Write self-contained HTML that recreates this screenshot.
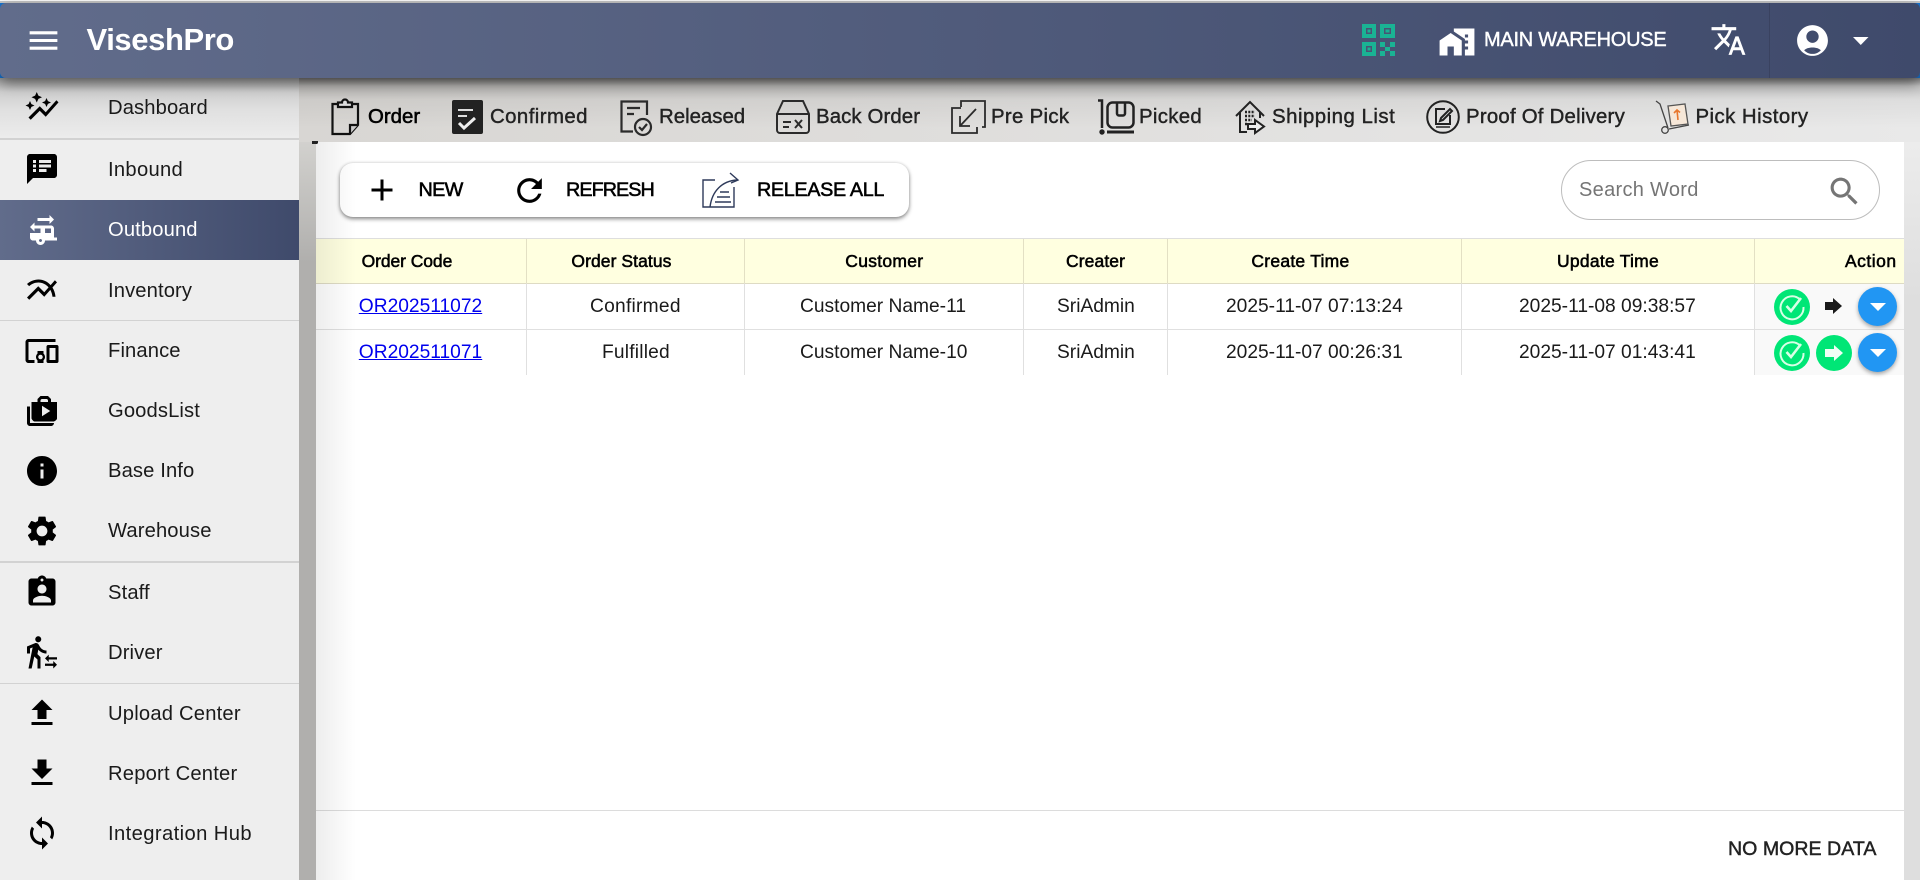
<!DOCTYPE html>
<html lang="en">
<head>
<meta charset="utf-8">
<title>ViseshPro</title>
<style>
html,body{margin:0;padding:0;width:1920px;height:880px;overflow:hidden;background:#fff}
body{position:relative;font-family:"Liberation Sans",Arial,sans-serif;color:#1a1a1a}
*{box-sizing:border-box}
.a{position:absolute}
.t{position:absolute;white-space:nowrap;line-height:24px;height:24px}
svg{position:absolute;display:block;overflow:visible}
#topline{left:0;top:1px;width:1920px;height:2px;background:#c8c8c8}
#cornerfill{left:0;top:3px;width:1920px;height:76px;background:#1976d2}
#hdr{left:0;top:3px;width:1920px;height:75px;background:linear-gradient(90deg,#616c8b 0%,#3f4a6b 100%);border-radius:6px;z-index:5;box-shadow:0 5px 14px rgba(0,0,0,.45)}
#side{left:0;top:78px;width:299px;height:802px;background:#eee}
#sideshade{left:0;top:78px;width:299px;height:60px;background:linear-gradient(180deg,#9f9f9f 0,#cfcfcf 14px,#e0e0e0 32px,#ececec 60px)}
.sep{position:absolute;left:0;width:299px;background:#d2d2d2}
#active{left:0;top:200px;width:299px;height:60px;background:linear-gradient(90deg,#616c8b,#3f4a6b)}
.nav{left:108px;font-size:20.2px;letter-spacing:.12px}
#band{left:299px;top:78px;width:1621px;height:64px;background:linear-gradient(90deg,#d8d6d3,#e9e9e9)}
#bandshade{left:299px;top:78px;width:1621px;height:64px;background:linear-gradient(180deg,rgba(0,0,0,.42) 0,rgba(0,0,0,.16) 8px,rgba(0,0,0,.05) 22px,rgba(0,0,0,0) 50px)}
#strip{left:299px;top:142px;width:17px;height:738px;background:linear-gradient(180deg,#d2d1ce 0,#b0afad 120px)}
#rstrip{left:1904px;top:142px;width:16px;height:738px;background:linear-gradient(180deg,#ececec 0,#dedede 160px)}
#card{left:316px;top:142px;width:1588px;height:738px;background:#fff;border-radius:5px 5px 0 0}
#fade{left:316px;top:142px;width:40px;height:738px;background:linear-gradient(90deg,rgba(0,0,0,.07),rgba(0,0,0,0));z-index:3;pointer-events:none}
.tab{font-size:20.4px;color:#222;-webkit-text-stroke:.4px #222;top:104.7px}
#btns{left:340px;top:163px;width:569px;height:54px;background:#fff;border-radius:13px;box-shadow:0 2px 4px rgba(0,0,0,.45),0 0 3px rgba(0,0,0,.12)}
.btn{font-size:19.8px;color:#000;-webkit-text-stroke:.55px #000;top:178px}
#search{left:1561px;top:160px;width:319px;height:60px;border:1px solid #bdbdbd;border-radius:30px;background:#fff}
#thead{left:316px;top:238px;width:1588px;height:46px;background:#ffffe0;border-top:1px solid #dedede;border-bottom:1px solid #dedbc4}
#r1line{left:316px;top:329px;width:1588px;height:1px;background:#e0e0e0}
#actbg{left:1755px;top:284px;width:149px;height:91px;background:#f9f9f9}
.vl{position:absolute;top:239px;width:1px;height:136px;background:linear-gradient(180deg,#e3e0c4 0,#e3e0c4 44px,#e0e0e0 45px,#e0e0e0 100%)}
.th{font-size:17.5px;color:#000;-webkit-text-stroke:.55px #000;top:249px}
.td{font-size:19.2px;color:#1a1a1a}
.r1{top:295px}.r2{top:341px}
a.t{color:#0000ee;text-decoration:underline}
.cir{position:absolute;width:36px;height:36px;border-radius:50%;background:#00e676}
.blue{position:absolute;left:1858px;width:39px;height:39px;border-radius:50%;background:#2196f3;box-shadow:0 2px 4px rgba(0,0,0,.35)}
#foot{left:316px;top:810px;width:1588px;height:1px;background:#dcdcdc}
</style>
</head>
<body>
<div class="a" id="topline"></div>
<div class="a" id="cornerfill"></div>

<!-- drawer -->
<div class="a" id="side"></div>
<div class="a" id="sideshade"></div>
<div class="sep" style="top:138px;height:2px"></div>
<div class="sep" style="top:320px;height:1px"></div>
<div class="sep" style="top:561px;height:2px"></div>
<div class="sep" style="top:683px;height:1px"></div>
<div class="a" id="active"></div>

<svg style="left:24px;top:89px" width="36" height="36" viewBox="0 0 24 24"><path d="M14.06 9.94L12 9l2.06-.94L15 6l.94 2.06L18 9l-2.06.94L15 12l-.94-2.06zM4 14l.94-2.06L7 11l-2.06-.94L4 8l-.94 2.06L1 11l2.06.94L4 14zm4.5-5l1.09-2.41L12 5.5 9.59 4.41 8.5 2 7.41 4.41 5 5.5l2.41 1.09L8.5 9zm-4 11.5l6-6.01 4 4L23 8.93l-1.41-1.41-7.09 7.97-4-4L3 19l1.5 1.5z"/></svg>
<div class="t nav" style="top:96px">Dashboard</div>
<svg style="left:24px;top:151px" width="36" height="36" viewBox="0 0 24 24"><path d="M20 2H4c-1.1 0-1.99.9-1.99 2L2 22l4-4h14c1.1 0 2-.9 2-2V4c0-1.1-.9-2-2-2zM8 14H6v-2h2v2zm0-3H6V9h2v2zm0-3H6V6h2v2zm7 6h-5v-2h5v2zm3-3h-8V9h8v2zm0-3h-8V6h8v2z"/></svg>
<div class="t nav" style="top:158px;letter-spacing:.3px">Inbound</div>
<svg style="left:24px;top:212px" width="36" height="36" viewBox="0 0 24 24" fill="#fff"><path d="M20 17v-6c0-1.1-.9-2-2-2H7V7l-3 3 3 3v-2h4v3H4v3c0 1.1.9 2 2 2h2c0 1.66 1.34 3 3 3s3-1.34 3-3h8v-2h-2zm-9 3c-.55 0-1-.45-1-1s.45-1 1-1 1 .45 1 1-.45 1-1 1zm7-6h-4v-3h4v3zM17 2v2H9v2h8v2l3-3z"/></svg>
<div class="t nav" style="top:218px;color:#fff">Outbound</div>
<svg style="left:24px;top:272px" width="36" height="36" viewBox="0 0 24 24"><path d="M22 6.92l-1.41-1.41-2.85 3.21C15.68 6.4 12.83 5 9.61 5 6.72 5 4.07 6.16 2 8l1.42 1.42C5.12 7.93 7.27 7 9.61 7c2.74 0 5.09 1.26 6.77 3.24l-2.88 3.24-4-4L2 16.99l1.5 1.5 6-6.01 4 4 4.05-4.55c.75 1.35 1.25 2.9 1.44 4.55H21c-.22-2.3-.95-4.39-2.04-6.14L22 6.92z"/></svg>
<div class="t nav" style="top:278.500px">Inventory</div>
<svg style="left:24px;top:333px" width="36" height="36" viewBox="0 0 24 24"><path d="M3 6h18V4H3c-1.1 0-2 .9-2 2v12c0 1.1.9 2 2 2h4v-2H3V6zm10 6H9v1.78c-.61.55-1 1.33-1 2.22s.39 1.67 1 2.22V20h4v-1.78c.61-.55 1-1.34 1-2.22s-.39-1.67-1-2.22V12zm-2 5.5c-.83 0-1.5-.67-1.5-1.5s.67-1.5 1.5-1.5 1.5.67 1.5 1.5-.67 1.5-1.5 1.5zM22 8h-6c-.5 0-1 .5-1 1v10c0 .5.5 1 1 1h6c.5 0 1-.5 1-1V9c0-.5-.5-1-1-1zm-1 10h-4v-8h4v8z"/></svg>
<div class="t nav" style="top:339px">Finance</div>
<svg style="left:24px;top:393px" width="36" height="36" viewBox="0 0 24 24"><path fill-rule="evenodd" d="M18 6V4l-2-2h-5L9 4v2H5v11s1 2 2 2h13s2-.98 2-2V6h-4zM4 9H2v11c0 1.11.89 2 2 2h14c1.11 0 2-.89 2-2H4V9zm7-4c0-.55.53-1 1-1h3c.55 0 1 .45 1 1v1h-5V5zm1 3.5v7l5.5-3.5z"/></svg>
<div class="t nav" style="top:399px">GoodsList</div>
<svg style="left:24px;top:453px" width="36" height="36" viewBox="0 0 24 24"><path d="M12 2C6.48 2 2 6.48 2 12s4.48 10 10 10 10-4.48 10-10S17.52 2 12 2zm1 15h-2v-6h2v6zm0-8h-2V7h2v2z"/></svg>
<div class="t nav" style="top:459px">Base Info</div>
<svg style="left:24px;top:513px" width="36" height="36" viewBox="0 0 24 24"><path d="M19.14 12.94c.04-.3.06-.61.06-.94 0-.32-.02-.64-.07-.94l2.03-1.58c.18-.14.23-.41.12-.61l-1.92-3.32c-.12-.22-.37-.29-.59-.22l-2.39.96c-.5-.38-1.03-.7-1.62-.94l-.36-2.54c-.04-.24-.24-.41-.48-.41h-3.84c-.24 0-.43.17-.47.41l-.36 2.54c-.59.24-1.13.57-1.62.94l-2.39-.96c-.22-.08-.47 0-.59.22L2.74 8.87c-.12.21-.08.47.12.61l2.03 1.58c-.05.3-.09.63-.09.94s.02.64.07.94l-2.03 1.58c-.18.14-.23.41-.12.61l1.92 3.32c.12.22.37.29.59.22l2.39-.96c.5.38 1.03.7 1.62.94l.36 2.54c.05.24.24.41.48.41h3.84c.24 0 .44-.17.47-.41l.36-2.54c.59-.24 1.13-.56 1.62-.94l2.39.96c.22.08.47 0 .59-.22l1.92-3.32c.12-.22.07-.47-.12-.61l-2.01-1.58zM12 15.6c-1.98 0-3.6-1.62-3.6-3.6s1.62-3.6 3.6-3.6 3.6 1.62 3.6 3.6-1.62 3.6-3.6 3.6z"/></svg>
<div class="t nav" style="top:519px">Warehouse</div>
<svg style="left:24px;top:574px" width="36" height="36" viewBox="0 0 24 24"><path d="M19 3h-4.18C14.4 1.84 13.3 1 12 1c-1.3 0-2.4.84-2.82 2H5c-1.1 0-2 .9-2 2v14c0 1.1.9 2 2 2h14c1.1 0 2-.9 2-2V5c0-1.1-.9-2-2-2zm-7 0c.55 0 1 .45 1 1s-.45 1-1 1-1-.45-1-1 .45-1 1-1zm0 4c1.66 0 3 1.34 3 3s-1.34 3-3 3-3-1.34-3-3 1.34-3 3-3zm6 12H6v-1.4c0-2 4-3.1 6-3.1s6 1.1 6 3.1V19z"/></svg>
<div class="t nav" style="top:581px">Staff</div>
<svg style="left:24px;top:634px" width="36" height="36" viewBox="0 0 24 24"><path d="M16.49 15.5v-1.75L14 16.25l2.49 2.5V17H22v-1.5zm3.02 4.25H14v1.5h5.51V23L22 20.5 19.51 18zM9.5 5.5c1.1 0 2-.9 2-2s-.9-2-2-2-2 .9-2 2 .9 2 2 2zM5.75 8.9L3 23h2.1l1.75-8L9 17v6h2v-7.55L8.95 13.4l.6-3C10.85 12 12.8 13 15 13v-2c-1.85 0-3.45-1-4.35-2.45l-.95-1.6C9.35 6.35 8.7 6 8 6c-.25 0-.5.05-.75.15L2 8.3V13h2V9.65l1.75-.75"/></svg>
<div class="t nav" style="top:641px">Driver</div>
<svg style="left:24px;top:695px" width="36" height="36" viewBox="0 0 24 24"><path d="M9 16h6v-6h4l-7-7-7 7h4zm-4 2h14v2H5z"/></svg>
<div class="t nav" style="top:702px;letter-spacing:.2px">Upload Center</div>
<svg style="left:24px;top:755px" width="36" height="36" viewBox="0 0 24 24"><path d="M19 9h-4V3H9v6H5l7 7 7-7zM5 18v2h14v-2H5z"/></svg>
<div class="t nav" style="top:762px;letter-spacing:.2px">Report Center</div>
<svg style="left:24px;top:815px" width="36" height="36" viewBox="0 0 24 24"><path d="M12 4V1L8 5l4 4V6c3.31 0 6 2.69 6 6 0 1.01-.25 1.97-.7 2.8l1.46 1.46C19.54 15.03 20 13.57 20 12c0-4.42-3.58-8-8-8zm0 14c-3.31 0-6-2.69-6-6 0-1.01.25-1.97.7-2.8L5.24 7.74C4.46 8.97 4 10.43 4 12c0 4.42 3.58 8 8 8v3l4-4-4-4v3z"/></svg>
<div class="t nav" style="top:822px;letter-spacing:.4px">Integration Hub</div>

<!-- content background -->
<div class="a" id="band"></div>
<div class="a" id="bandshade"></div>
<div class="a" id="strip"></div>
<div class="a" id="rstrip"></div>
<div class="a" style="left:312px;top:141px;width:6px;height:3px;background:#222"></div>
<div class="a" id="card"></div>
<div class="a" id="fade"></div>

<!-- tabs -->
<svg style="left:331px;top:99px" width="28" height="36" fill="none" stroke="#111" stroke-width="2.200"><path d="M6 5H1.500v30H19l8-9V5h-6"/><path d="M19 35v-9h8" fill="#ccc"/><path d="M7 8V3.500h4a3 3 0 0 1 6 0h4V8z" fill="#ddd"/></svg>
<div class="t tab" style="left:368px;color:#000;-webkit-text-stroke:.55px #000">Order</div>

<svg style="left:452px;top:100px" width="31" height="34"><rect width="31" height="34" rx="2" fill="#222"/><path d="M6 10h15M6 16h9" stroke="#ddd" stroke-width="2" fill="none"/><path d="M7 23l5 5 11-10" stroke="#eee" stroke-width="3" fill="none"/></svg>
<div class="t tab" style="left:490px;letter-spacing:.43px">Confirmed</div>

<svg style="left:620px;top:100px" width="34" height="37" fill="none" stroke="#2b2b2b" stroke-width="2.200"><path d="M27 15V1.500H1.500v30H13"/><path d="M7 8h13M7 14h7"/><circle cx="23" cy="27" r="8"/><path d="M19 27l3 3 5-6"/></svg>
<div class="t tab" style="left:659px">Released</div>

<svg style="left:776px;top:100px" width="34" height="34" fill="none" stroke="#2b2b2b" stroke-width="2"><path d="M7 1h20l6 13v16a3 3 0 0 1-3 3H4a3 3 0 0 1-3-3V14z"/><path d="M1 14h32"/><path d="M7 22h8M7 27h6M19 20l7 8M26 20l-7 8"/></svg>
<div class="t tab" style="left:816px;letter-spacing:.1px">Back Order</div>

<svg style="left:951px;top:100px" width="35" height="35" fill="none" stroke="#2b2b2b" stroke-width="1.800"><path d="M10 7V1h24v26h-3"/><path d="M10 8H1v25h25v-6"/><path d="M25 9L9 26M9 16v10h10"/></svg>
<div class="t tab" style="left:991px;letter-spacing:.3px">Pre Pick</div>

<svg style="left:1098px;top:99px" width="37" height="36" fill="none" stroke="#222" stroke-width="2.500"><path d="M0 1.500h4V29"/><circle cx="4" cy="33" r="2.700" fill="#222" stroke="none"/><rect x="9.500" y="3.500" width="26" height="25" rx="5"/><path d="M19 3.500v11a2 2 0 0 0 2 2h4a2 2 0 0 0 2-2v-11"/><path d="M9 33h27" stroke-width="3"/></svg>
<div class="t tab" style="left:1139px;letter-spacing:.3px">Picked</div>

<svg style="left:1235px;top:101px" width="31" height="33" fill="none" stroke="#222" stroke-width="2"><path d="M1 15L15 1l14 14"/><path d="M5 11v20h7"/><path d="M25 11v6"/><path d="M10 11h10M10 15h10M10 19h7M10 23h3" stroke-width="2.500" stroke-dasharray="2 1.300"/><path d="M13 23h7v-4l9 6.500-9 6.500v-4h-7z" fill="#eee"/></svg>
<div class="t tab" style="left:1272px;letter-spacing:.5px">Shipping List</div>

<svg style="left:1426px;top:100px" width="34" height="34" fill="none" stroke="#222" stroke-width="2"><circle cx="17" cy="17" r="15.800"/><path d="M19 9h-9v15h14v-9"/><path d="M15 18l9-9 2 2-9 9-3 1z" fill="#ddd"/><path d="M10 27h14" stroke-width="1.500"/></svg>
<div class="t tab" style="left:1466px;letter-spacing:.22px">Proof Of Delivery</div>

<svg style="left:1656px;top:101px" width="34" height="33" fill="none" stroke="#444" stroke-width="1.300"><path d="M0 0l4 3 8 24"/><circle cx="9" cy="29" r="3.300"/><path d="M13 28l20-4"/><path d="M12 5l17-2 3 20-17 2z" fill="#f6e7d8" stroke="#555"/><path d="M22 19l-1-10M18 12l3-3 3 2.500" stroke="#e8772e" stroke-width="1.600"/></svg>
<div class="t tab" style="left:1695.500px;letter-spacing:.45px">Pick History</div>

<!-- toolbar -->
<div class="a" id="btns"></div>
<svg style="left:364px;top:172px" width="36" height="36" viewBox="0 0 24 24"><path d="M19 13h-6v6h-2v-6H5v-2h6V5h2v6h6v2z"/></svg>
<div class="t btn" style="left:418.500px;letter-spacing:-.7px">NEW</div>
<svg style="left:511px;top:171.500px" width="37" height="37" viewBox="0 0 24 24"><path d="M17.650 6.350C16.200 4.900 14.210 4 12 4c-4.420 0-7.990 3.580-7.990 8s3.570 8 7.990 8c3.730 0 6.840-2.550 7.730-6h-2.080c-.82 2.330-3.040 4-5.650 4-3.310 0-6-2.690-6-6s2.690-6 6-6c1.660 0 3.140.69 4.220 1.780L13 11h7V4l-2.350 2.350z"/></svg>
<div class="t btn" style="left:566px;letter-spacing:-.95px">REFRESH</div>
<svg style="left:702px;top:172px" width="37" height="37" fill="none" stroke="#2e3a5a" stroke-width="1.400"><path d="M13 8H1v27h31V15"/><path d="M8 35C10 19 20 9 35 8"/><path d="M28 1l8 7-7 3"/><path d="M18 20h9M15 25h13M13 30h16"/></svg>
<div class="t btn" style="left:757px;letter-spacing:-.35px">RELEASE ALL</div>

<!-- search -->
<div class="a" id="search"></div>
<div class="t" style="left:1579px;top:178px;font-size:20px;letter-spacing:.3px;color:#757575">Search Word</div>
<svg style="left:1825.500px;top:172.500px" width="37" height="37" viewBox="0 0 24 24" fill="#757575"><path d="M15.500 14h-.79l-.28-.27C15.410 12.590 16 11.110 16 9.500 16 5.910 13.090 3 9.500 3S3 5.910 3 9.500 5.910 16 9.500 16c1.610 0 3.090-.59 4.230-1.570l.27.28v.79l5 4.990L20.490 19l-4.990-5zm-6 0C7.010 14 5 11.990 5 9.500S7.010 5 9.500 5 14 7.010 14 9.500 11.990 14 9.500 14z"/></svg>

<!-- table -->
<div class="a" id="thead"></div>
<div class="a" id="actbg"></div>
<div class="a" id="r1line"></div>
<div class="vl" style="left:526px"></div>
<div class="vl" style="left:744px"></div>
<div class="vl" style="left:1023px"></div>
<div class="vl" style="left:1167px"></div>
<div class="vl" style="left:1461px"></div>
<div class="vl" style="left:1754px"></div>

<div class="t th" style="left:361.600px;letter-spacing:-.08px">Order Code</div>
<div class="t th" style="left:571.400px;letter-spacing:.07px">Order Status</div>
<div class="t th" style="left:845.300px;letter-spacing:.27px">Customer</div>
<div class="t th" style="left:1066px;letter-spacing:.1px">Creater</div>
<div class="t th" style="left:1251.400px;letter-spacing:.25px">Create Time</div>
<div class="t th" style="left:1557px;letter-spacing:.25px">Update Time</div>
<div class="t th" style="left:1845px;letter-spacing:.5px">Action</div>

<a class="t td r1" href="#" style="left:358.800px">OR202511072</a>
<div class="t td r1" style="left:590px;letter-spacing:.25px">Confirmed</div>
<div class="t td r1" style="left:800px">Customer Name-11</div>
<div class="t td r1" style="left:1057px">SriAdmin</div>
<div class="t td r1" style="left:1226px">2025-11-07 07:13:24</div>
<div class="t td r1" style="left:1519px">2025-11-08 09:38:57</div>

<a class="t td r2" href="#" style="left:358.800px">OR202511071</a>
<div class="t td r2" style="left:602px;letter-spacing:.2px">Fulfilled</div>
<div class="t td r2" style="left:800px">Customer Name-10</div>
<div class="t td r2" style="left:1057px">SriAdmin</div>
<div class="t td r2" style="left:1226px">2025-11-07 00:26:31</div>
<div class="t td r2" style="left:1519px">2025-11-07 01:43:41</div>

<!-- row actions -->
<div class="cir" style="left:1774px;top:289px"><svg width="36" height="36" fill="none" stroke="#d8ffe6"><path d="M26 10.500A11.500 11.500 0 1 0 29.500 18" stroke-width="2"/><path d="M12.500 17l4.500 5L27 9" stroke-width="2.600"/></svg></div>
<svg style="left:1825px;top:298px" width="17" height="16"><path d="M0 4h8V0l9 8-9 8v-4H0z" fill="#1a1a1a"/></svg>
<div class="blue" style="top:287px"><svg style="left:11.500px;top:16px" width="16" height="8"><path d="M0 0h16L8 8z" fill="#fff"/></svg></div>

<div class="cir" style="left:1774px;top:335px"><svg width="36" height="36" fill="none" stroke="#d8ffe6"><path d="M26 10.500A11.500 11.500 0 1 0 29.500 18" stroke-width="2"/><path d="M12.500 17l4.500 5L27 9" stroke-width="2.600"/></svg></div>
<div class="cir" style="left:1816px;top:335px"><svg style="left:9px;top:10px" width="18" height="16"><path d="M0 4h9V0l9 8-9 8v-4H0z" fill="#f1fff6"/></svg></div>
<div class="blue" style="top:333px"><svg style="left:11.500px;top:16px" width="16" height="8"><path d="M0 0h16L8 8z" fill="#fff"/></svg></div>

<!-- footer -->
<div class="a" id="foot"></div>
<div class="t" style="left:1728px;top:836.500px;font-size:19.6px;letter-spacing:0;color:#222;-webkit-text-stroke:.45px #222">NO MORE DATA</div>

<!-- header -->
<div class="a" id="hdr">
  <svg style="left:25px;top:18.500px" width="37" height="37" viewBox="0 0 24 24" fill="#fff"><path d="M3 18h18v-2H3v2zm0-5h18v-2H3v2zm0-7v2h18V6H3z"/></svg>
  <div class="t" style="left:86.500px;top:25px;font-size:31px;letter-spacing:-.4px;font-weight:700;color:#fff">ViseshPro</div>
  <svg style="left:1361.500px;top:21px" width="33" height="32" fill="#1ab394"><path fill-rule="evenodd" d="M0 0h14v14H0zM4 4v6h6V4zM18 0h15v14H18zM22 4v6h7V4zM0 18h14v14H0zM4 22v6h6v-6z"/><path d="M5.500 5.500h3v3h-3zM23.500 5.500h4v3h-4zM5.500 23.500h3v3h-3zM18 18h5v5h-5zM28 18h5v5h-5zM23 23h5v4h-5zM18 27h5v5h-5zM28 27h5v5h-5z"/></svg>
  <svg style="left:1437.500px;top:21px" width="38" height="36" viewBox="0 0 24 24" preserveAspectRatio="none" fill="#fff"><path d="M1 11v10h5v-6h4v6h5V11L8 6z"/><path d="M10 3v1.970l7 5V11h2v2h-2v2h2v2h-2v4h6V3H10zm9 6h-2V7h2v2z"/></svg>
  <div class="t" style="left:1484px;top:25px;font-size:20px;letter-spacing:-.25px;color:#fff;-webkit-text-stroke:.4px #fff">MAIN WAREHOUSE</div>
  <svg style="left:1709.500px;top:18px" width="37" height="37" viewBox="0 0 24 24" fill="#fff"><path d="M12.870 15.070l-2.540-2.510.03-.03c1.740-1.940 2.980-4.170 3.710-6.530H17V4h-7V2H8v2H1v1.990h11.170C11.500 7.920 10.440 9.750 9 11.350 8.070 10.320 7.300 9.190 6.690 8h-2c.73 1.630 1.730 3.170 2.980 4.560l-5.090 5.020L4 19l5-5 3.110 3.110.76-2.040zM18.500 10h-2L12 22h2l1.120-3h4.750L21 22h2l-4.500-12zm-2.620 7l1.620-4.330L19.120 17h-3.240z"/></svg>
  <div class="a" style="left:1769px;top:0;width:1px;height:75px;background:rgba(0,0,0,.12)"></div>
  <svg style="left:1794px;top:19px" width="37" height="37" viewBox="0 0 24 24" fill="#fff"><path fill-rule="evenodd" d="M12 2C6.480 2 2 6.480 2 12s4.480 10 10 10 10-4.480 10-10S17.520 2 12 2zm0 3.500a4 4 0 1 1 0 8 4 4 0 0 1 0-8zm0 11c2.500 0 4.600.8 5.400 1.800-1.300 1.500-3.200 2.400-5.400 2.400s-4.100-.9-5.400-2.400c.8-1 2.900-1.800 5.400-1.800z"/></svg>
  <svg style="left:1852.500px;top:34px" width="15.500" height="8"><path d="M0 0h15.500L7.750 8z" fill="#fff"/></svg>
</div>
</body>
</html>
